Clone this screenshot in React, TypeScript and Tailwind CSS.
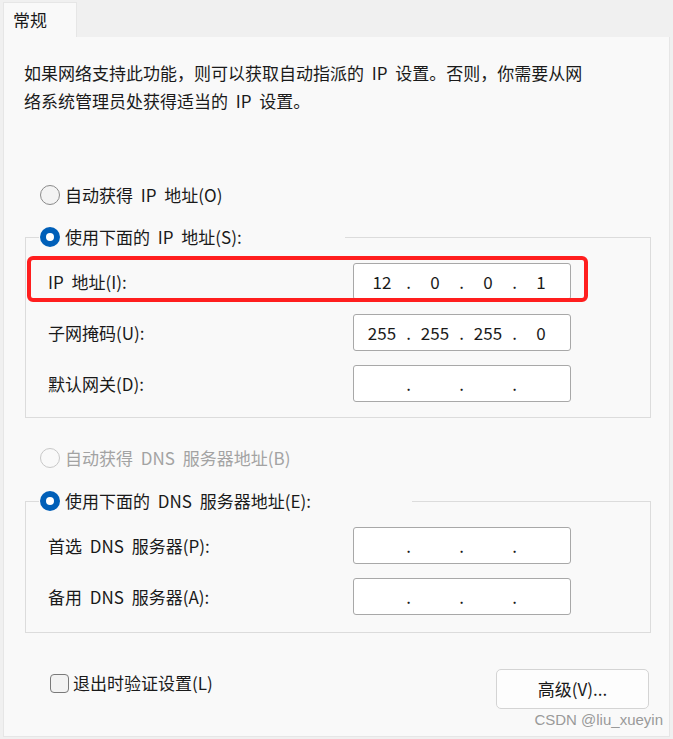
import React from "react";

const font = { fontFamily: '"Noto Sans CJK SC", "Noto Sans", sans-serif' };

function Radio({ checked, disabled }: { checked?: boolean; disabled?: boolean }) {
  if (checked) {
    return (
      <span className="w-[20px] h-[20px] rounded-full bg-[#005fb8] flex items-center justify-center shrink-0">
        <span className="w-[8px] h-[8px] rounded-full bg-white" />
      </span>
    );
  }
  return (
    <span
      className={`w-[20px] h-[20px] rounded-full border shrink-0 ${
        disabled ? "border-[#c8c8c8] bg-[#f9f9f9]" : "border-[#8a8a8a] bg-[#f3f3f3]"
      }`}
    />
  );
}

function IpBox({ parts }: { parts: string[] }) {
  return (
    <div className="w-[218px] h-[37px] bg-white border border-[#a8a8a8] rounded-[3px] flex items-center pl-[4px] text-[17px] text-[#1a1a1a] [word-spacing:0px]">
      {parts.map((p, i) => (
        <React.Fragment key={i}>
          {i > 0 && <span className="w-[5px] text-center">.</span>}
          <span className="w-[48px] text-center">{p}</span>
        </React.Fragment>
      ))}
    </div>
  );
}

function Row({ label, parts, marked }: { label: string; parts: string[]; marked?: boolean }) {
  return (
    <div className="relative flex items-center h-[37px]">
      <span className="w-[305px] text-[17px] text-[#1a1a1a]">{label}</span>
      <IpBox parts={parts} />
      {marked && (
        <div className="absolute left-[-21px] top-[-7px] w-[561px] h-[46px] border-[4px] border-[#ff1e1e] rounded-[6px] pointer-events-none" />
      )}
    </div>
  );
}

function Group({
  title,
  width,
  children,
}: {
  title: string;
  width: string;
  children: React.ReactNode;
}) {
  return (
    <fieldset className="ml-[21px] w-[626px] border border-[#dcdcdc] p-0 m-0">
      <legend className={`ml-[13px] p-0 ${width}`}>
        <div className="h-[28px] flex items-center gap-[5px] pl-[1px] text-[17px] text-[#1a1a1a]">
          <Radio checked />
          <span>{title}</span>
        </div>
      </legend>
      <div className="flex flex-col gap-[14px] pl-[22px] pt-[12px]">{children}</div>
    </fieldset>
  );
}

const empty = ["", "", "", ""];

export default function App() {
  return (
    <div
      className="w-[673px] h-[739px] bg-[#f0f0f0] overflow-hidden [word-spacing:4px]"
      style={font}
    >
      <div className="pt-[2px] pl-[3px] flex">
        <div className="w-[74px] h-[35px] bg-[#f9f9f9] border-l border-t border-r border-[#e6e6e6] flex items-center pl-[9px] text-[17px] text-[#1a1a1a]">
          常规
        </div>
      </div>
      <div className="ml-[3px] w-[667px] h-[700px] bg-[#f9f9f9] border-l border-r border-b border-[#e6e6e6]">
        <p className="pt-[22px] pl-[20px] text-[17px] leading-[28px] text-[#1a1a1a]">
          如果网络支持此功能，则可以获取自动指派的 IP 设置。否则，你需要从网
          <br />
          络系统管理员处获得适当的 IP 设置。
        </p>

        <div className="mt-[66px] pl-[36px] h-[28px] flex items-center gap-[5px] text-[17px] text-[#1a1a1a]">
          <Radio />
          <span>自动获得 IP 地址(O)</span>
        </div>

        <div className="mt-[14px]">
          <Group title="使用下面的 IP 地址(S):" width="w-[306px]">
            <Row label="IP 地址(I):" parts={["12", "0", "0", "1"]} marked />
            <Row label="子网掩码(U):" parts={["255", "255", "255", "0"]} />
            <div className="pb-[15px] -mb-[14px]">
              <Row label="默认网关(D):" parts={empty} />
            </div>
            <div />
          </Group>
        </div>

        <div className="mt-[26px] pl-[36px] h-[28px] flex items-center gap-[5px] text-[17px] text-[#a3a3a3]">
          <Radio disabled />
          <span>自动获得 DNS 服务器地址(B)</span>
        </div>

        <div className="mt-[15px]">
          <Group title="使用下面的 DNS 服务器地址(E):" width="w-[373px]">
            <Row label="首选 DNS 服务器(P):" parts={empty} />
            <div className="pb-[17px] -mb-[14px]">
              <Row label="备用 DNS 服务器(A):" parts={empty} />
            </div>
            <div />
          </Group>
        </div>

        <div className="mt-[36px] flex items-start justify-between pl-[46px] pr-[20px]">
          <label className="h-[28px] flex items-center gap-[4px] text-[17px] text-[#1a1a1a]">
            <span className="w-[19px] h-[19px] rounded-[4px] border border-[#7a7a7a] bg-[#f3f3f3]" />
            <span>退出时验证设置(L)</span>
          </label>
          <button className="w-[153px] h-[40px] bg-[#fdfdfd] border border-[#d4d4d4] rounded-[5px] text-[17px] text-[#1a1a1a]">
            高级(V)...
          </button>
        </div>
        <div
          className="mt-[2px] pr-[6px] text-right text-[15px] leading-[18px] text-[#9a9a9a] [word-spacing:0px]"
          style={{ fontFamily: '"Liberation Sans", Arial, sans-serif' }}
        >
          CSDN @liu_xueyin
        </div>
      </div>
    </div>
  );
}
